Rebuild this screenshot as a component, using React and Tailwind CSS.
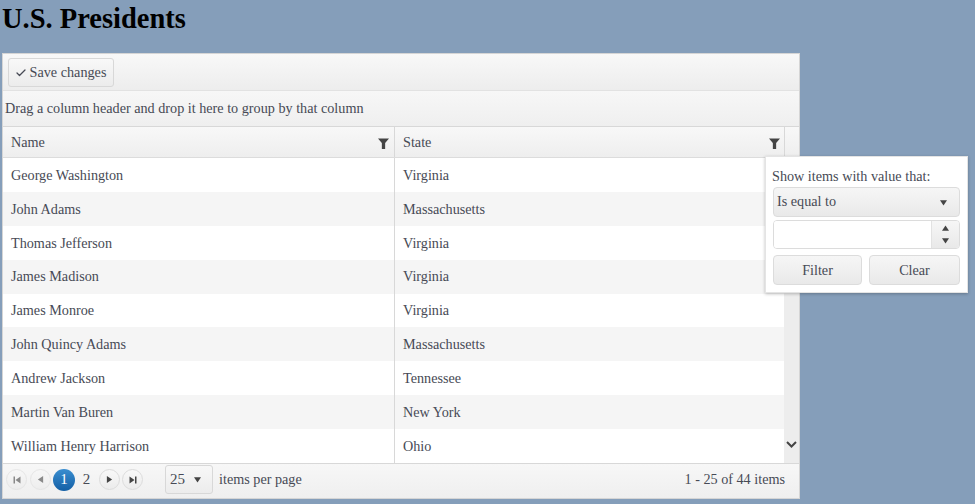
import { Check } from 'lucide-react'

const presidentes = [
  { nome: 'George Washington', estado: 'Virginia' },
  { nome: 'John Adams', estado: 'Massachusetts' },
  { nome: 'Thomas Jefferson', estado: 'Virginia' },
  { nome: 'James Madison', estado: 'Virginia' },
  { nome: 'James Monroe', estado: 'Virginia' },
  { nome: 'John Quincy Adams', estado: 'Massachusetts' },
  { nome: 'Andrew Jackson', estado: 'Tennessee' },
  { nome: 'Martin Van Buren', estado: 'New York' },
  { nome: 'William Henry Harrison', estado: 'Ohio' }
]

function FilterIcon() {
  return (
    <svg width="11" height="11" viewBox="0 0 10 10" className="text-[#444]">
      <path d="M0 0.5h10L6.5 4.5V10H3.5V4.5z" fill="currentColor" />
    </svg>
  )
}

function Triangle({ dir = 'down', size = 7 }) {
  const d = {
    down: 'M0 1.5h8L4 7.5z',
    up: 'M4 0.5l4 6H0z',
    left: 'M7 0v8L1 4z',
    right: 'M1 0v8l6-4z'
  }[dir]

  return (
    <svg width={size} height={size} viewBox="0 0 8 8" className="text-[#444]">
      <path d={d} fill="currentColor" />
    </svg>
  )
}

function PagerButton({ children, muted }) {
  return (
    <span
      className={`w-[21px] h-[21px] rounded-full border border-[#dcdcdc] flex items-center justify-center bg-gradient-to-b from-[#f8f8f8] to-[#ececec] ${muted ? 'opacity-60' : ''}`}
    >
      {children}
    </span>
  )
}

function FirstLast({ last }) {
  return (
    <svg width="8" height="8" viewBox="0 0 8 8" className="text-[#444]">
      <path
        d={last ? 'M0.5 0.5v7l5-3.5zM6 0.5h1.5v7H6z' : 'M7.5 0.5v7l-5-3.5zM0.5 0.5H2v7H0.5z'}
        fill="currentColor"
      />
    </svg>
  )
}

function App() {
  return (
    <div className="relative w-[975px] h-[504px] overflow-hidden bg-[#859eba] text-[#474a55] font-['Liberation_Serif',serif] text-[14.2px]">

      <h1 className="h-[53px] pl-[2px] pt-[3px] text-[28.5px] leading-[32px] font-bold text-black">
        U.S. Presidents
      </h1>

      {/* grid */}
      <div className="ml-[2px] w-[798px] h-[446px] flex flex-col bg-white border border-[#d5d5d5]">

        {/* toolbar */}
        <div className="h-[37px] flex items-center pl-[5px] border-b border-[#e2e2e2] bg-gradient-to-b from-[#f8f8f8] to-[#ededed]">
          <button className="h-[29px] w-[106px] pt-[1px] pr-[1px] flex items-center justify-center gap-[3px] rounded-[3px] border border-[#d8d8d8] bg-gradient-to-b from-[#f8f8f8] to-[#ececec]">
            <Check size={12} strokeWidth={2.5} />
            Save changes
          </button>
        </div>

        {/* group bar */}
        <div className="h-[36px] flex items-center pl-[2px] border-b border-[#d8d8d8] bg-gradient-to-b from-[#f7f7f7] to-[#efefef]">
          Drag a column header and drop it here to group by that column
        </div>

        {/* cabecalho */}
        <div className="h-[31px] flex border-b border-[#dcdcdc] bg-gradient-to-b from-[#f8f8f8] to-[#eeeeee]">
          <div className="w-[392px] flex items-center justify-between pl-[8px] pr-[5px] border-r border-[#d8d8d8]">
            <span className="mt-[1px]">Name</span>
            <span className="mt-[3px]"><FilterIcon /></span>
          </div>
          <div className="w-[390px] flex items-center justify-between pl-[8px] pr-[4px] border-r border-[#d8d8d8]">
            <span className="mt-[1px]">State</span>
            <span className="mt-[3px]"><FilterIcon /></span>
          </div>
          <div className="flex-1" />
        </div>

        {/* linhas */}
        <div className="flex-1 flex min-h-0">
          <div className="w-[781px] shrink-0 flex flex-col">
            {presidentes.map((presidente, i) => (
              <div
                key={presidente.nome}
                className={`h-[34px] flex items-center ${i % 2 === 1 ? 'bg-[#f5f5f5]' : 'bg-white'}`}
              >
                <div className="w-[392px] h-full flex items-center pl-[8px] pt-[1px] border-r border-[#d8d8d8]">
                  {presidente.nome}
                </div>
                <div className="pl-[8px] pt-[1px]">
                  {presidente.estado}
                </div>
              </div>
            ))}
          </div>
          <div className="flex-1 min-w-0 flex flex-col justify-end items-center bg-[#ededed] pb-[15px]">
            <svg width="11" height="7" viewBox="0 0 11 7" className="text-[#444] shrink-0">
              <path d="M1 1l4.5 4.5L10 1" fill="none" stroke="currentColor" strokeWidth="2" />
            </svg>
          </div>
        </div>

        {/* rodape */}
        <div className="h-[35px] flex items-center pl-[3px] pr-[14px] pb-[3px] border-t border-[#d8d8d8] bg-gradient-to-b from-[#f7f7f7] to-[#efefef]">
          <div className="flex items-center gap-[3px]">
            <PagerButton muted><FirstLast /></PagerButton>
            <PagerButton muted><Triangle dir="left" /></PagerButton>
          </div>
          <span className="ml-[2px] w-[22px] h-[22px] rounded-full flex items-center justify-center text-white bg-gradient-to-b from-[#3a8ed0] to-[#125fa5] text-[15px]">
            1
          </span>
          <span className="w-[23px] text-center text-[15px]">2</span>
          <div className="ml-[1px] flex items-center gap-[2px]">
            <PagerButton><Triangle dir="right" /></PagerButton>
            <PagerButton><FirstLast last /></PagerButton>
          </div>
          <div className="ml-[22px] w-[48px] h-[29px] flex items-center justify-between pl-[4px] pr-[11px] rounded-[3px] border border-[#d8d8d8] bg-gradient-to-b from-[#f8f8f8] to-[#ececec] text-[15px]">
            25
            <Triangle />
          </div>
          <span className="ml-[6px]">items per page</span>
          <span className="ml-auto">1 - 25 of 44 items</span>
        </div>
      </div>

      {/* popup do filtro */}
      <div className="absolute left-[765px] top-[156px] w-[203px] h-[137px] px-[7px] pt-[11px] bg-white border border-[#e4e4e4] shadow-[0_1px_3px_rgba(0,0,0,0.25)]">
        <div className="-ml-[1px] leading-[16px]">Show items with value that:</div>
        <div className="mt-[3px] h-[30px] flex items-center justify-between pl-[3px] pr-[12px] rounded-[4px] border border-[#dcdcdc] bg-gradient-to-b from-[#f6f6f6] to-[#e9e9e9]">
          Is equal to
          <Triangle />
        </div>
        <div className="mt-[3px] h-[29px] flex rounded-[4px] border border-[#dcdcdc] overflow-hidden">
          <div className="flex-1 bg-white" />
          <div className="w-[28px] flex flex-col items-center justify-center gap-[5px] border-l border-[#e2e2e2] bg-gradient-to-b from-[#f6f6f6] to-[#e9e9e9]">
            <Triangle dir="up" />
            <Triangle />
          </div>
        </div>
        <div className="mt-[6px] flex justify-between">
          <button className="w-[89px] h-[30px] pt-[1px] rounded-[4px] border border-[#dcdcdc] bg-gradient-to-b from-[#f6f6f6] to-[#e9e9e9]">
            Filter
          </button>
          <button className="w-[91px] h-[30px] pt-[1px] rounded-[4px] border border-[#dcdcdc] bg-gradient-to-b from-[#f6f6f6] to-[#e9e9e9]">
            Clear
          </button>
        </div>
      </div>

    </div>
  )
}

export default App
